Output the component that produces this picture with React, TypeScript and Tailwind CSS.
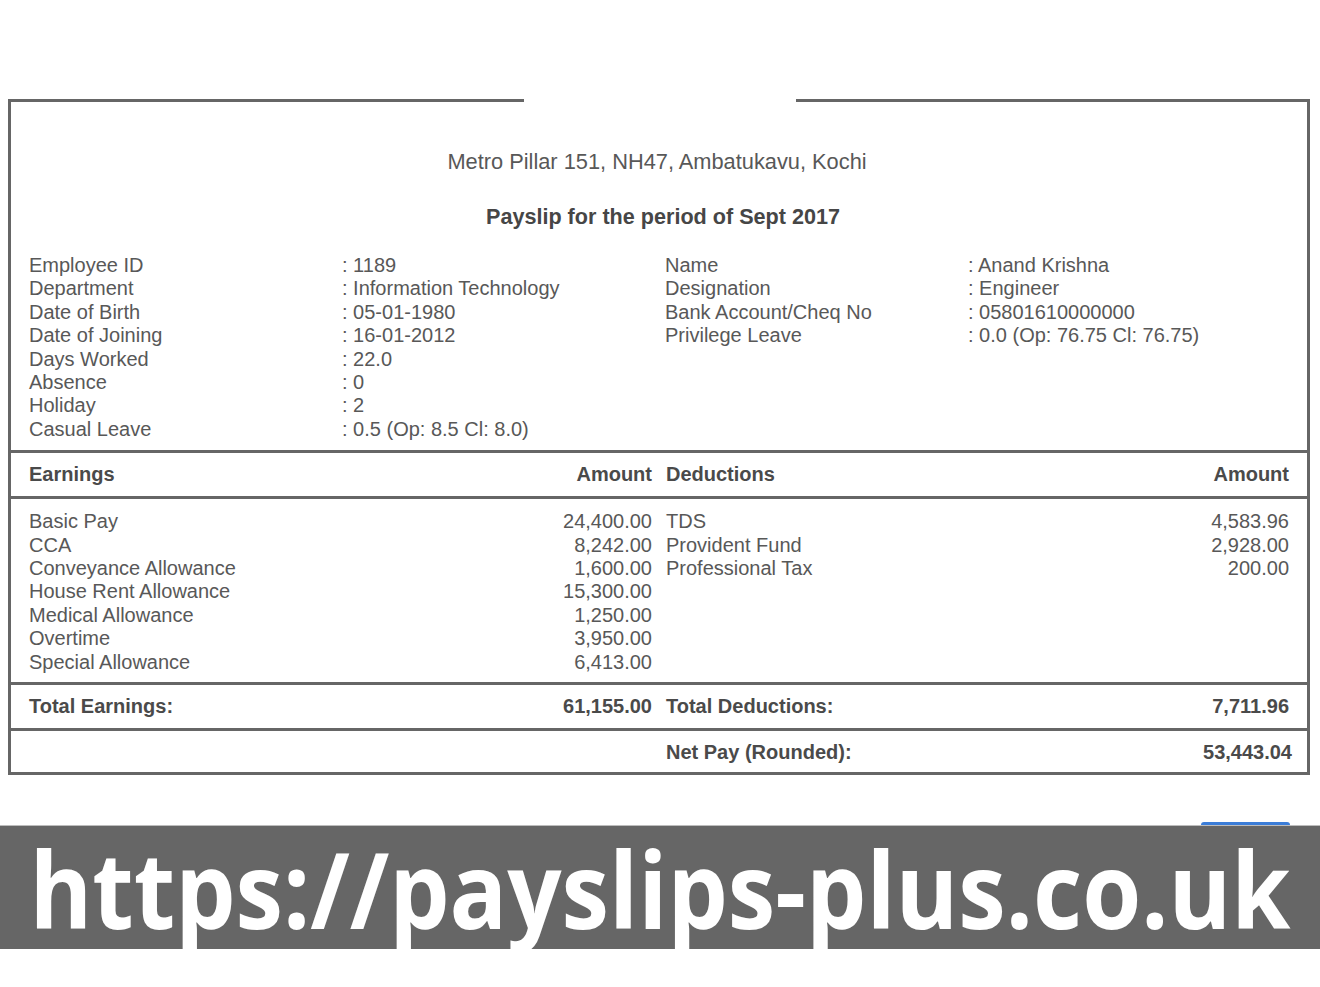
import React from "react";

const info: [string, string, string, string][] = [
  ["Employee ID", ": 1189", "Name", ": Anand Krishna"],
  ["Department", ": Information Technology", "Designation", ": Engineer"],
  ["Date of Birth", ": 05-01-1980", "Bank Account/Cheq No", ": 05801610000000"],
  ["Date of Joining", ": 16-01-2012", "Privilege Leave", ": 0.0 (Op: 76.75 Cl: 76.75)"],
  ["Days Worked", ": 22.0", "", ""],
  ["Absence", ": 0", "", ""],
  ["Holiday", ": 2", "", ""],
  ["Casual Leave", ": 0.5 (Op: 8.5 Cl: 8.0)", "", ""],
];

const earnings: [string, string][] = [
  ["Basic Pay", "24,400.00"],
  ["CCA", "8,242.00"],
  ["Conveyance Allowance", "1,600.00"],
  ["House Rent Allowance", "15,300.00"],
  ["Medical Allowance", "1,250.00"],
  ["Overtime", "3,950.00"],
  ["Special Allowance", "6,413.00"],
];

const deductions: [string, string][] = [
  ["TDS", "4,583.96"],
  ["Provident Fund", "2,928.00"],
  ["Professional Tax", "200.00"],
];

function Divider() {
  return <div className="h-[3px] bg-[#666666]" />;
}

export default function App() {
  return (
    <div
      className="w-[1320px] h-[987px] bg-white overflow-hidden text-[#585858]"
      style={{ fontFamily: '"Liberation Sans", Arial, sans-serif' }}
    >
      <div className="h-[99px]" />
      <div className="ml-[8px] w-[1302px]">
        {/* top border with gap */}
        <div className="flex h-[3px]">
          <div className="w-[516px] bg-[#666666]" />
          <div className="w-[272px]" />
          <div className="flex-1 bg-[#666666]" />
        </div>
        <div className="border-x-[3px] border-b-[3px] border-[#666666]">
          {/* header */}
          <div className="pt-[47px] pb-[9px]">
            <div className="text-center text-[21.8px] leading-[25px] pr-[4px]">
              Metro Pillar 151, NH47, Ambatukavu, Kochi
            </div>
            <div className="mt-[30px] text-center text-[21.6px] leading-[25px] font-bold text-[#464646] pl-[8px]">
              Payslip for the period of Sept 2017
            </div>
            <div className="mt-[25px] pl-[18px] grid grid-cols-[313px_323px_303px_1fr] text-[20px] leading-[23.4px]">
              {info.map((r, i) => (
                <React.Fragment key={i}>
                  <div>{r[0]}</div>
                  <div>{r[1]}</div>
                  <div>{r[2]}</div>
                  <div>{r[3]}</div>
                </React.Fragment>
              ))}
            </div>
          </div>
          <Divider />
          {/* table header */}
          <div className="h-[43px] pt-[10px] px-[18px] grid grid-cols-2 gap-x-[14px] text-[20px] leading-[23.4px] font-bold text-[#4a4a4a]">
            <div className="flex justify-between">
              <span>Earnings</span>
              <span>Amount</span>
            </div>
            <div className="flex justify-between">
              <span>Deductions</span>
              <span>Amount</span>
            </div>
          </div>
          <Divider />
          {/* items */}
          <div className="pt-[11px] pb-[8px] px-[18px] grid grid-cols-2 gap-x-[14px] text-[20px] leading-[23.4px]">
            <div>
              {earnings.map(([l, v]) => (
                <div key={l} className="flex justify-between">
                  <span>{l}</span>
                  <span>{v}</span>
                </div>
              ))}
            </div>
            <div>
              {deductions.map(([l, v]) => (
                <div key={l} className="flex justify-between">
                  <span>{l}</span>
                  <span>{v}</span>
                </div>
              ))}
            </div>
          </div>
          <Divider />
          {/* totals */}
          <div className="h-[43px] pt-[10px] px-[18px] grid grid-cols-2 gap-x-[14px] text-[20px] leading-[23.4px] font-bold text-[#4a4a4a]">
            <div className="flex justify-between">
              <span>Total Earnings:</span>
              <span>61,155.00</span>
            </div>
            <div className="flex justify-between">
              <span>Total Deductions:</span>
              <span>7,711.96</span>
            </div>
          </div>
          <Divider />
          <div className="h-[41px] pt-[10px] px-[18px] grid grid-cols-2 gap-x-[14px] text-[20px] leading-[23.4px] font-bold text-[#4a4a4a]">
            <div />
            <div className="flex justify-between mr-[-3px]">
              <span>Net Pay (Rounded):</span>
              <span>53,443.04</span>
            </div>
          </div>
        </div>
      </div>
      {/* blue button peeking */}
      <div className="mt-[47px] flex justify-end pr-[30px]">
        <div className="w-[89px] h-[3px] rounded-t-[4px] bg-[#3b7dd8]" />
      </div>
      {/* banner */}
      <div className="h-[124px] bg-[#666666] border-t border-[#bdbdbd] flex items-center justify-center">
        <div
          className="text-white font-bold text-[95.5px] leading-none scale-y-[1.11] mt-[2px] whitespace-nowrap"
          style={{ fontFamily: '"Open Sans", "Noto Sans", sans-serif' }}
        >
          https://payslips-plus.co.uk
        </div>
      </div>
    </div>
  );
}
